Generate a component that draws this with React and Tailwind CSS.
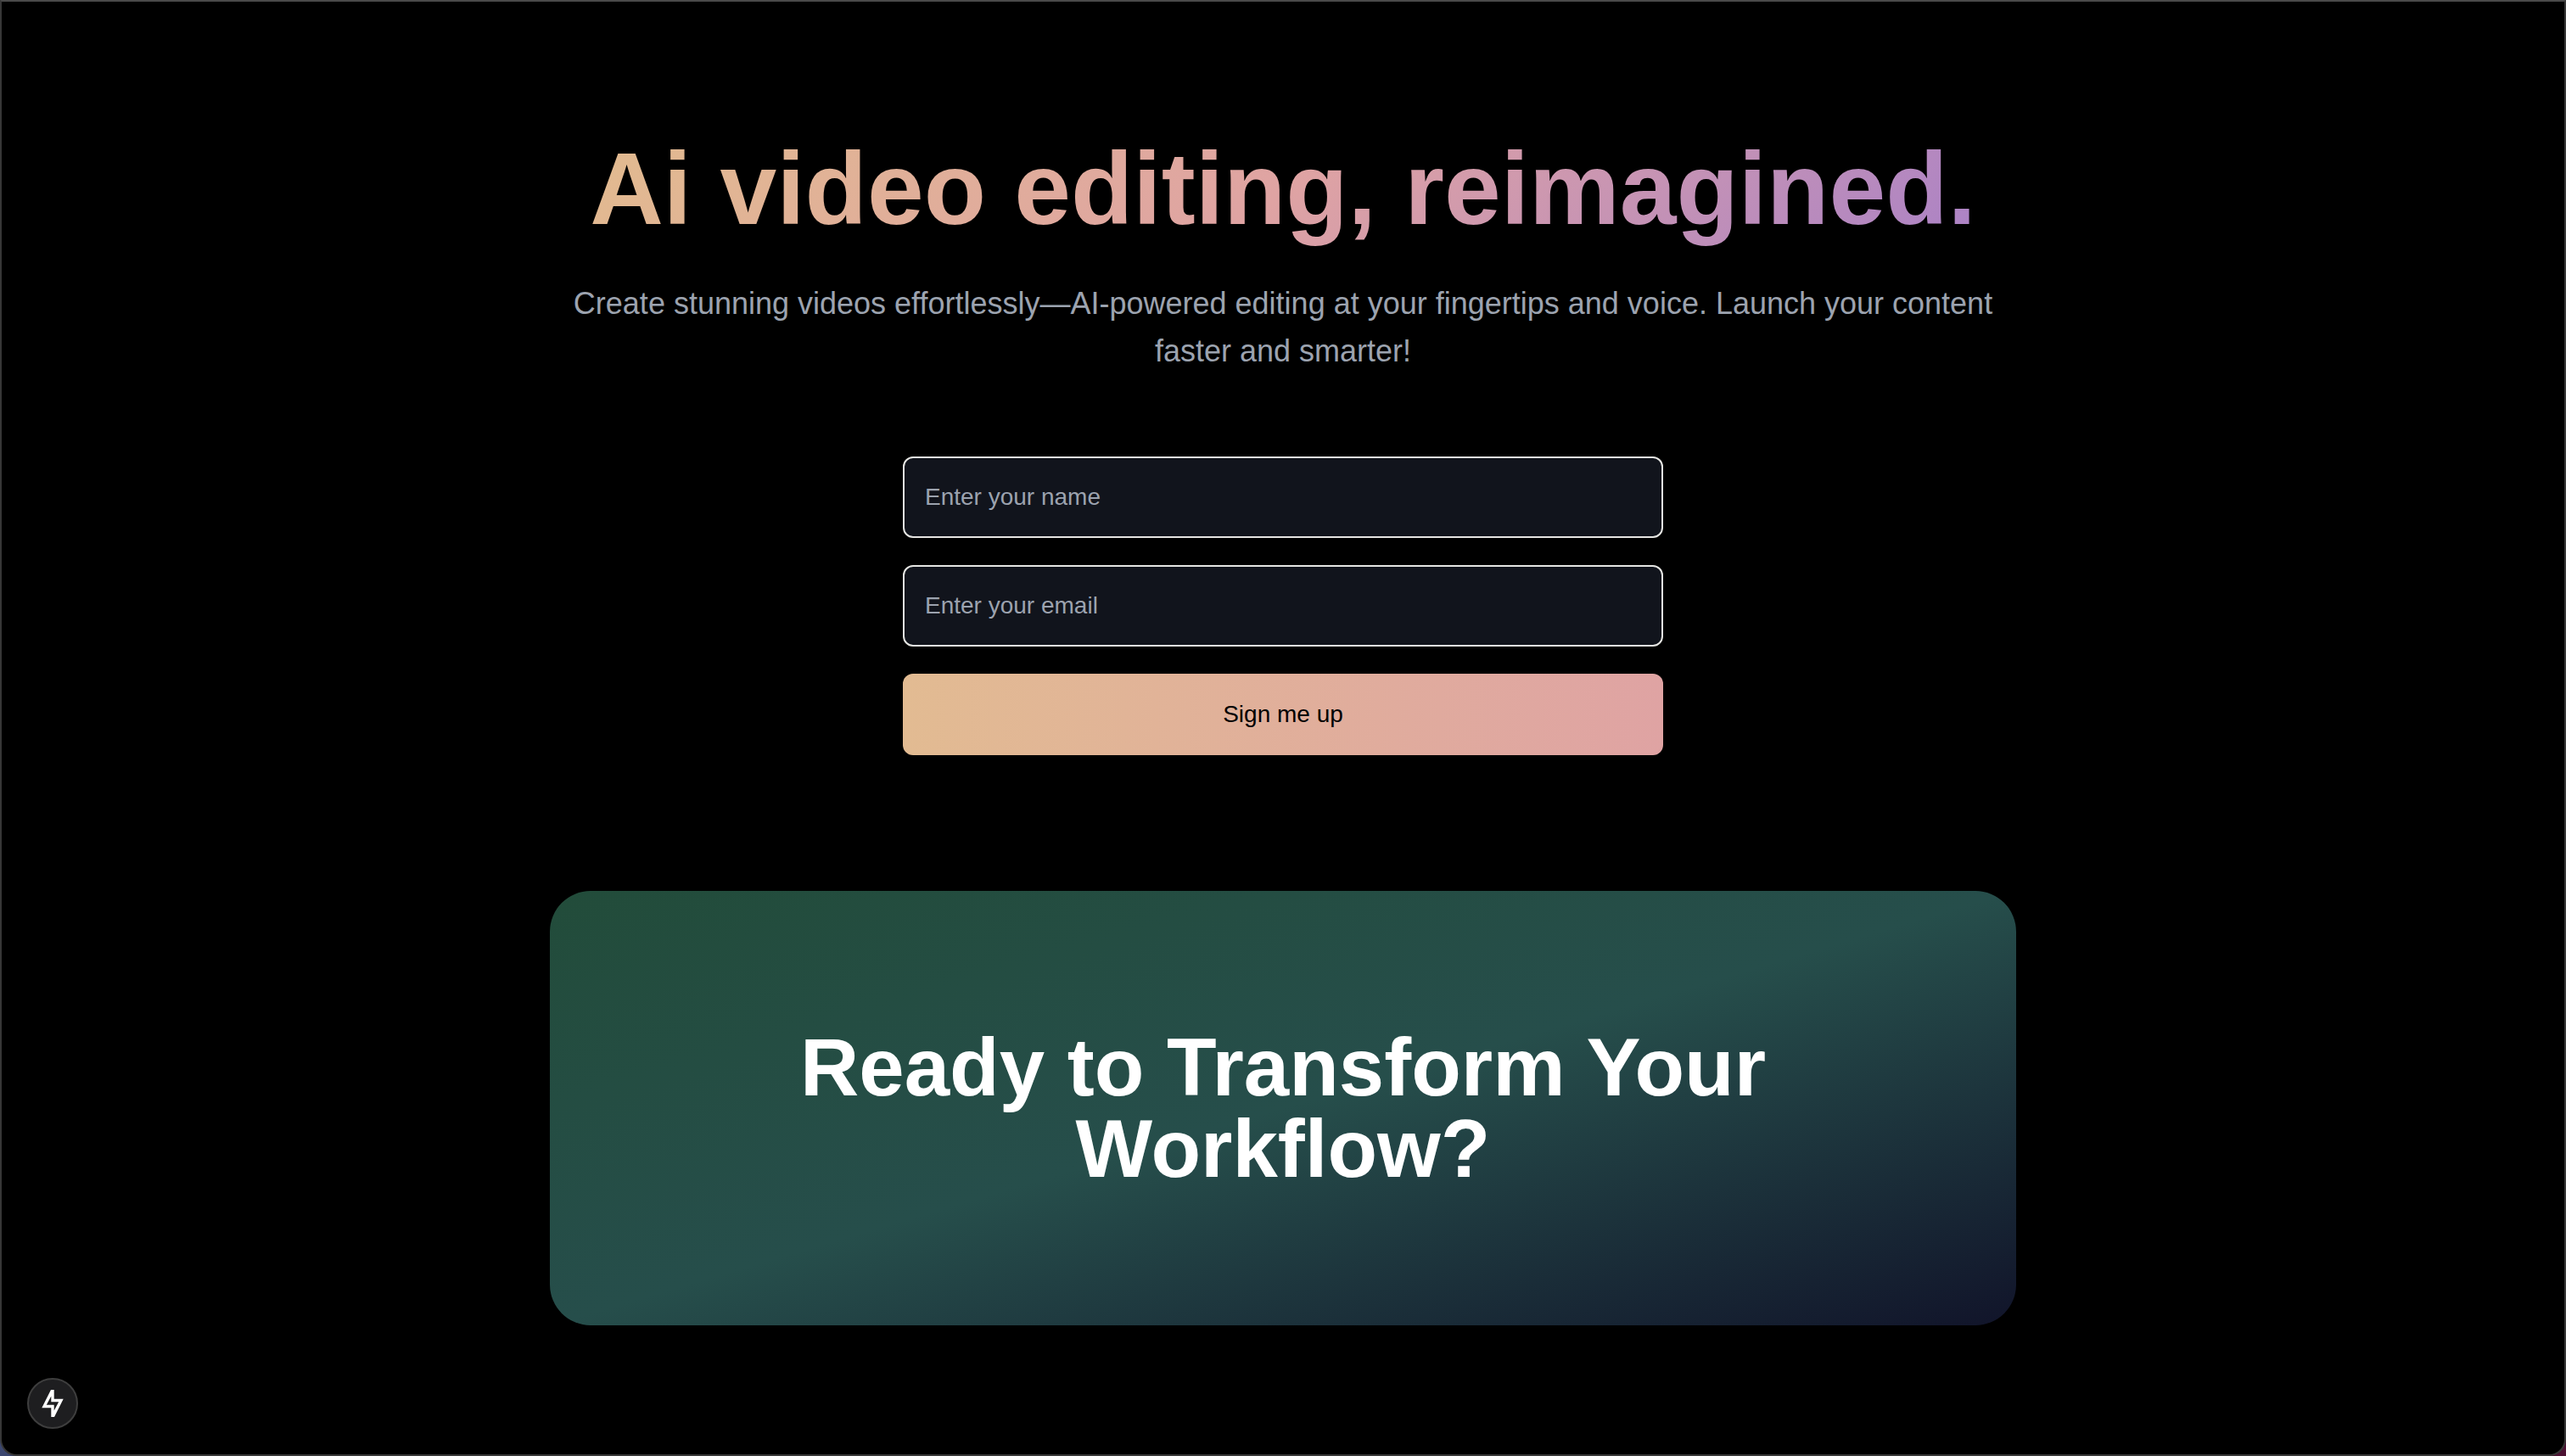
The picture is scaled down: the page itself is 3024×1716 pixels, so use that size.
function Field({ label, type }) {
  return (
    <input
      type={type}
      aria-label={label}
      placeholder={label}
      className="block h-24 w-full rounded-xl border-2 border-[#e5e5e2] bg-[#11141c] px-6 text-[28px] text-white outline-none placeholder:text-[#9ca3af]"
    />
  );
}

export default function App() {
  return (
    <div className="min-h-screen bg-[linear-gradient(to_right,#3c4770,#4d1233)] font-['Liberation_Sans',Arial,sans-serif]">
      <div className="flex min-h-screen flex-col items-center rounded-b-[20px] border-2 border-[#373737] border-t-[#4a4a4a] bg-black px-12">
        <main className="flex w-full max-w-[1728px] flex-col items-center pt-40">
          <h1 className="bg-[linear-gradient(135deg,#e2bb8f,#dfa3a3,#ab82c6)] bg-clip-text pb-2 text-center text-[120px] leading-none font-bold text-transparent">
            Ai video editing, reimagined.
          </h1>
          <p className="mt-10 text-center text-4xl leading-[56px] text-[#9ca3af]">
            Create stunning videos effortlessly—AI-powered editing at your fingertips and voice. Launch your content
            faster and smarter!
          </p>
          <form className="mt-24 flex w-full max-w-4xl flex-col gap-8" onSubmit={(e) => e.preventDefault()}>
            <Field type="text" label="Enter your name" />
            <Field type="email" label="Enter your email" />
            <button
              type="submit"
              className="h-24 w-full rounded-xl bg-[linear-gradient(to_right,#e2bb92,#dfa3a3)] text-[28px] text-black"
            >
              Sign me up
            </button>
          </form>
          <section className="mt-40 flex w-full justify-center rounded-[48px] bg-[linear-gradient(to_bottom_right,#224c3a,#264e4b,#11142a)] p-40">
            <h2 className="max-w-[1280px] text-center text-8xl leading-none font-bold text-white">
              Ready to Transform Your Workflow?
            </h2>
          </section>
        </main>
      </div>
      <button
        type="button"
        aria-label="Open developer tools"
        className="fixed bottom-8 left-8 flex size-15 items-center justify-center rounded-full border-2 border-[#3e3e3e] bg-[#1e1e20] text-white"
      >
        <svg viewBox="0 0 32 32" className="size-8" fill="currentColor" fillRule="evenodd">
          <path d="M14 0H17.7V10.8H28.7L18 32H14.3V21.2H3.3ZM14.3 7.5L8.8 17.8H17.7V24.5L23.2 14.2H14.3Z" />
        </svg>
      </button>
    </div>
  );
}
